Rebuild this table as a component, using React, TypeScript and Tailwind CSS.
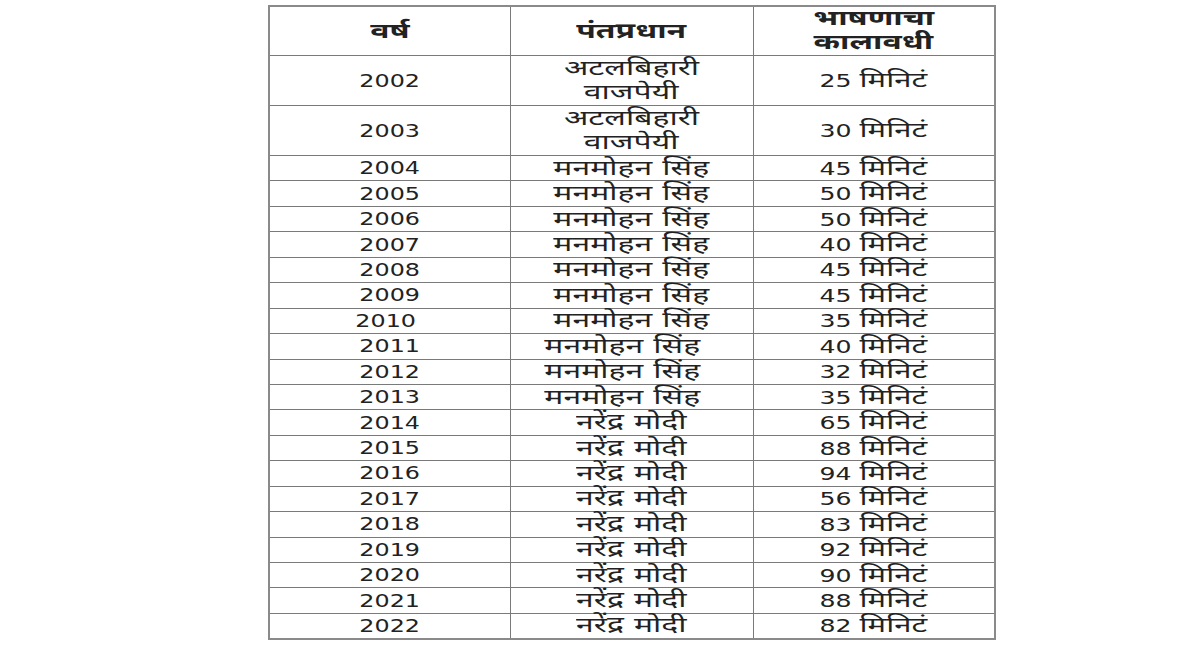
const ROWS: [string, string, string][] = [
  ["2004", "मनमोहन सिंह", "45"],
  ["2005", "मनमोहन सिंह", "50"],
  ["2006", "मनमोहन सिंह", "50"],
  ["2007", "मनमोहन सिंह", "40"],
  ["2008", "मनमोहन सिंह", "45"],
  ["2009", "मनमोहन सिंह", "45"],
  ["2010", "मनमोहन सिंह", "35"],
  ["2011", "मनमोहन सिंह", "40"],
  ["2012", "मनमोहन सिंह", "32"],
  ["2013", "मनमोहन सिंह", "35"],
  ["2014", "नरेंद्र मोदी", "65"],
  ["2015", "नरेंद्र मोदी", "88"],
  ["2016", "नरेंद्र मोदी", "94"],
  ["2017", "नरेंद्र मोदी", "56"],
  ["2018", "नरेंद्र मोदी", "83"],
  ["2019", "नरेंद्र मोदी", "92"],
  ["2020", "नरेंद्र मोदी", "90"],
  ["2021", "नरेंद्र मोदी", "88"],
  ["2022", "नरेंद्र मोदी", "82"],
];

// the source picture is stretched sideways, so the text is too
function Num({ children }: { children: React.ReactNode }) {
  return <span className="inline-block scale-x-[1.4]">{children}</span>;
}

function Dev({ children }: { children: React.ReactNode }) {
  return (
    <span className="inline-block scale-x-[1.52] text-[21px]">{children}</span>
  );
}

function Time({ n }: { n: string }) {
  return (
    <span className="inline-block scale-x-[1.48] whitespace-nowrap">
      {n} <span className="text-[21px]">मिनिटं</span>
    </span>
  );
}

const cell = "border border-[#7a7a7a] text-center align-middle p-0";

export default function App() {
  return (
    <div className="w-[1200px] h-[650px] bg-white pt-[5px] pl-[268px] font-['DejaVu_Sans','Noto_Sans',sans-serif] text-[17px] text-[#222]">
      <table className="table-fixed border-collapse border-2 border-[#8a8a8a] w-[726px] leading-[20px]">
        <colgroup>
          <col className="w-[241px]" />
          <col className="w-[243px]" />
          <col className="w-[242px]" />
        </colgroup>
        <thead>
          <tr className="h-[49px]">
            <th className={`${cell} font-bold`}>
              <Dev>वर्ष</Dev>
            </th>
            <th className={`${cell} font-bold`}>
              <Dev>पंतप्रधान</Dev>
            </th>
            <th className={`${cell} font-bold leading-[23px]`}>
              <Dev>भाषणाचा</Dev>
              <br />
              <Dev>कालावधी</Dev>
            </th>
          </tr>
        </thead>
        <tbody>
          {[
            ["2002", "25"],
            ["2003", "30"],
          ].map(([year, time]) => (
            <tr key={year} className="h-[50px]">
              <td className={cell}>
                <Num>{year}</Num>
              </td>
              <td className={`${cell} leading-[23px]`}>
                <Dev>अटलबिहारी</Dev>
                <br />
                <Dev>वाजपेयी</Dev>
              </td>
              <td className={cell}>
                <Time n={time} />
              </td>
            </tr>
          ))}
          {ROWS.map(([year, pm, time]) => (
            <tr key={year} className="h-[25.45px]">
              <td className={`${cell} ${year === "2010" ? "pr-[8px]" : ""}`}>
                <Num>{year}</Num>
              </td>
              <td
                className={`${cell} ${
                  ["2011", "2012", "2013"].includes(year) ? "pr-[18px]" : ""
                }`}
              >
                <Dev>{pm}</Dev>
              </td>
              <td className={cell}>
                <Time n={time} />
              </td>
            </tr>
          ))}
        </tbody>
      </table>
    </div>
  );
}
